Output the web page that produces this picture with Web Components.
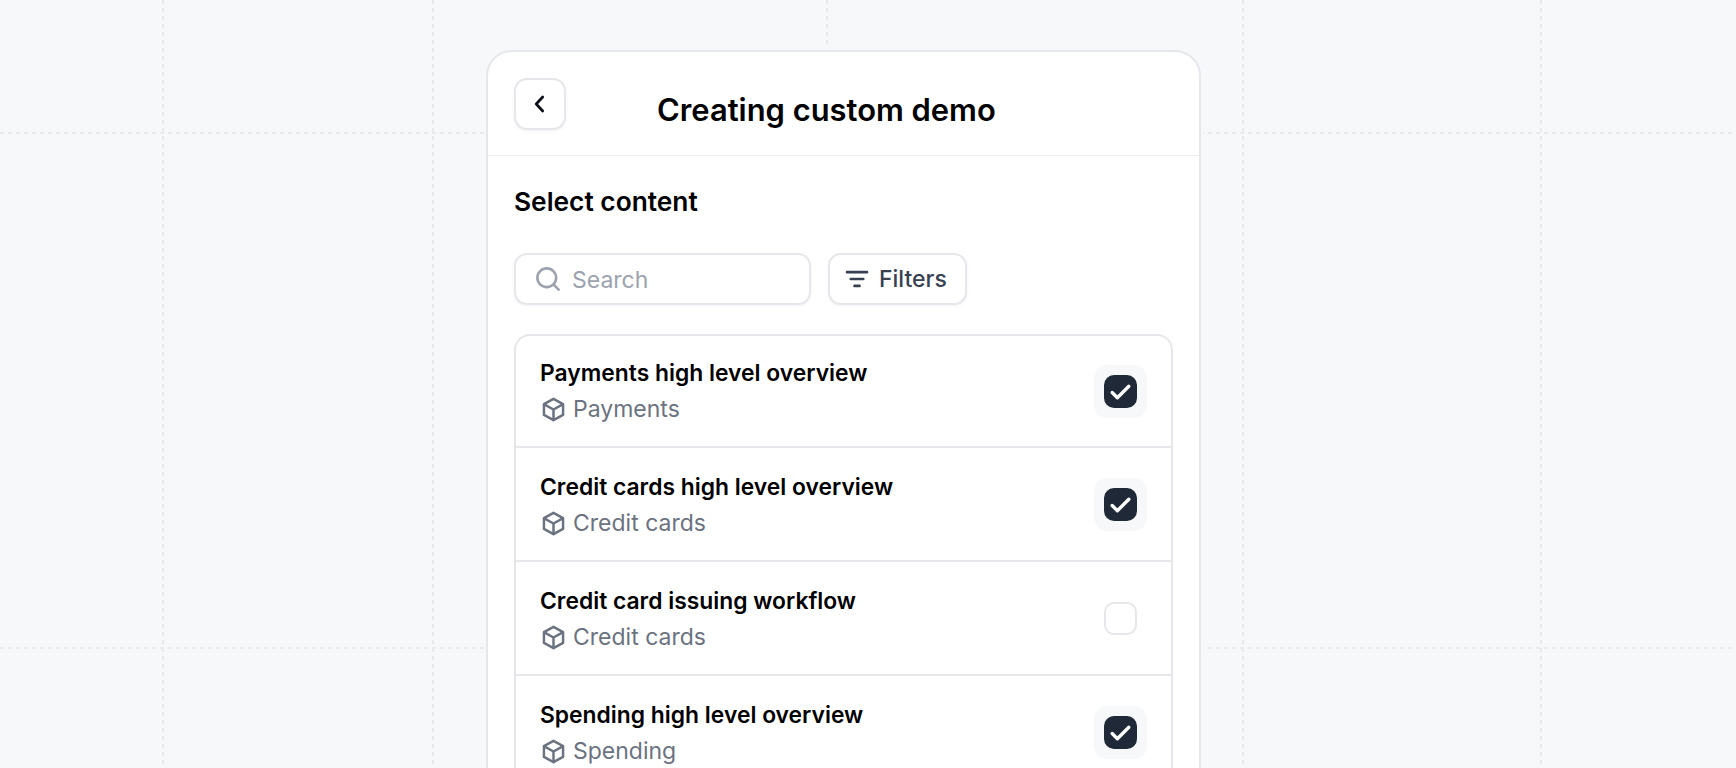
<!DOCTYPE html>
<html>
<head>
<meta charset="utf-8">
<title>Creating custom demo</title>
<style>
html, body { margin: 0; height: 100%; overflow: hidden; background: #f7f8fa; }
body { font-family: Inter, "Liberation Sans", sans-serif; }
</style>
</head>
<body>
<demo-backdrop>
	<demo-card>
		<demo-header title-text="Creating custom demo"></demo-header>
		<demo-section>
			<span slot="heading">Select content</span>
			<demo-toolbar></demo-toolbar>
			<demo-list>
				<demo-row checked label="Payments">Payments high level overview</demo-row>
				<demo-row checked label="Credit cards">Credit cards high level overview</demo-row>
				<demo-row label="Credit cards">Credit card issuing workflow</demo-row>
				<demo-row checked label="Spending">Spending high level overview</demo-row>
			</demo-list>
		</demo-section>
	</demo-card>
</demo-backdrop>

<script>
(function() {
	const dashV = "repeating-linear-gradient(to bottom, #e8eaee 0 4px, transparent 4px 8px)";
	const dashH = "repeating-linear-gradient(to right, #e8eaee 0 4px, transparent 4px 8px)";

	class DemoBackdrop extends HTMLElement {
		constructor() {
			super();
			this.attachShadow({mode: "open"}).innerHTML = `
				<style>
				:host {
					display: block;
					position: relative;
					width: 1736px;
					height: 768px;
					overflow: hidden;
					box-sizing: border-box;
					padding: 50px 0 0 486px;
					background: #f7f8fa;
				}
				.line { position: absolute; }
				.v { top: 0; bottom: 0; width: 2px; background: ${dashV}; }
				.h { left: 0; right: 0; height: 2px; background: ${dashH}; }
				</style>
				<div class="line v" style="left:162px"></div>
				<div class="line v" style="left:432px"></div>
				<div class="line v" style="left:826px"></div>
				<div class="line v" style="left:1242px"></div>
				<div class="line v" style="left:1540px"></div>
				<div class="line h" style="top:132px"></div>
				<div class="line h" style="top:647px"></div>
				<slot></slot>
			`;
		}
	}

	class DemoCard extends HTMLElement {
		constructor() {
			super();
			this.attachShadow({mode: "open"}).innerHTML = `
				<style>
				:host {
					display: block;
					position: relative;
					box-sizing: border-box;
					width: 715px;
					height: 900px;
					background: #fff;
					border: 2px solid #e5e7eb;
					border-radius: 26px;
					box-shadow: 0 0 0 2px #f7f8fa;
				}
				</style>
				<slot></slot>
			`;
		}
	}

	class DemoHeader extends HTMLElement {
		constructor() {
			super();
			this.attachShadow({mode: "open"}).innerHTML = `
				<style>
				:host {
					display: flex;
					align-items: flex-start;
					box-sizing: border-box;
					height: 104px;
					padding: 26px 26px 0;
					border-bottom: 1px solid #eceef1;
				}
				button {
					display: flex;
					align-items: center;
					justify-content: center;
					box-sizing: border-box;
					width: 52px;
					height: 52px;
					padding: 0;
					background: #fff;
					border: 2px solid #e5e7eb;
					border-radius: 13px;
					box-shadow: 0 1px 3px rgba(16,24,40,.06);
				}
				h1 {
					margin: 7px 0 0 91px;
					font: 600 30.9px/50px Inter, "Liberation Sans", sans-serif;
					color: #000;
				}
				</style>
				<button aria-label="Back">
					<svg width="26" height="26" viewBox="0 0 24 24" fill="none" stroke="#0b0f19" stroke-width="2.5" stroke-linecap="round" stroke-linejoin="round"><path d="M14.5 5.5 8.5 12l6 6.5"/></svg>
				</button>
				<h1></h1>
			`;
		}

		connectedCallback() {
			this.shadowRoot.querySelector("h1").textContent = this.getAttribute("title-text");
		}
	}

	class DemoSection extends HTMLElement {
		constructor() {
			super();
			this.attachShadow({mode: "open"}).innerHTML = `
				<style>
				:host {
					display: block;
					padding: 28px 26px 0;
				}
				h2 {
					margin: 0 0 33px;
					font: 600 26.3px/36px Inter, "Liberation Sans", sans-serif;
					color: #000;
				}
				</style>
				<h2><slot name="heading"></slot></h2>
				<slot></slot>
			`;
		}
	}

	class DemoToolbar extends HTMLElement {
		constructor() {
			super();
			this.attachShadow({mode: "open"}).innerHTML = `
				<style>
				:host {
					display: flex;
					gap: 17px;
					margin-bottom: 29px;
					font: 400 23px/32px Inter, "Liberation Sans", sans-serif;
				}
				.box {
					display: flex;
					align-items: center;
					box-sizing: border-box;
					height: 52px;
					background: #fff;
					border: 2px solid #e5e7eb;
					border-radius: 13px;
					box-shadow: 0 1px 3px rgba(16,24,40,.06);
				}
				.search {
					width: 297px;
					padding-left: 17px;
					gap: 9px;
					color: #9ca3af;
				}
				.search span { padding-top: 2px; }
				.filters {
					padding: 0 18px 0 12px;
					gap: 7px;
					color: #374151;
					font-weight: 500;
				}
				</style>
				<div class="box search">
					<svg width="30" height="30" viewBox="0 0 24 24" fill="none" stroke="#9ca3af" stroke-width="2.1" stroke-linecap="round"><circle cx="11" cy="11" r="7.5"/><path d="m16.5 16.5 4 4"/></svg>
					<span>Search</span>
				</div>
				<div class="box filters">
					<svg width="30" height="30" viewBox="0 0 24 24" fill="none" stroke="#374151" stroke-width="2.1" stroke-linecap="round"><path d="M4 6.5h16M7 12h10M10 17.5h4"/></svg>
					<span>Filters</span>
				</div>
			`;
		}
	}

	class DemoList extends HTMLElement {
		constructor() {
			super();
			this.attachShadow({mode: "open"}).innerHTML = `
				<style>
				:host {
					display: block;
					width: 659px;
					box-sizing: border-box;
					background: #fff;
					border: 2px solid #e5e7eb;
					border-radius: 16px;
				}
				</style>
				<slot></slot>
			`;
		}
	}

	class DemoRow extends HTMLElement {
		constructor() {
			super();
			this.attachShadow({mode: "open"}).innerHTML = `
				<style>
				:host {
					display: flex;
					align-items: center;
					justify-content: space-between;
					box-sizing: border-box;
					height: 114px;
					padding: 0 24px;
					border-bottom: 2px solid #e5e7eb;
				}
				:host(:first-child) { height: 112px; }
				.text { padding-top: 2px; }
				:host(:first-child) .text { padding-top: 0; }
				.title {
					font: 600 22.85px/36px Inter, "Liberation Sans", sans-serif;
					color: #000;
				}
				.sub {
					display: flex;
					align-items: center;
					gap: 6px;
					font: 400 23px/36px Inter, "Liberation Sans", sans-serif;
					color: #6b7280;
				}
				.halo {
					display: flex;
					align-items: center;
					justify-content: center;
					width: 53px;
					height: 53px;
					border-radius: 13px;
				}
				.halo.on { background: #f7f8fa; }
				.check {
					display: flex;
					align-items: center;
					justify-content: center;
					box-sizing: border-box;
					width: 33px;
					height: 33px;
					border: 2px solid #e5e7eb;
					border-radius: 10px;
					background: #fff;
				}
				.on .check { background: #1f2937; border-color: #1f2937; }
				.check svg { display: none; }
				.on .check svg { display: block; }
				</style>
				<div class="text">
					<div class="title"><slot></slot></div>
					<div class="sub">
						<svg width="27" height="27" viewBox="0 0 24 24" fill="none" stroke="#6b7280" stroke-width="2.2" stroke-linecap="round" stroke-linejoin="round"><path d="M12 2.5 20.5 7.2v9.6L12 21.5l-8.5-4.7V7.2Z"/><path d="M3.8 7.4 12 12l8.2-4.6M12 12v9.3"/></svg>
						<span class="label"></span>
					</div>
				</div>
				<div class="halo">
					<div class="check">
						<svg width="25" height="25" viewBox="0 0 24 24" fill="none" stroke="#fff" stroke-width="3.2" stroke-linecap="round" stroke-linejoin="round"><path d="m4 13 5 5L20 7"/></svg>
					</div>
				</div>
			`;
		}

		connectedCallback() {
			this.shadowRoot.querySelector(".label").textContent = this.getAttribute("label");
			this.shadowRoot.querySelector(".halo").classList.toggle("on", this.hasAttribute("checked"));
		}
	}

	customElements.define("demo-backdrop", DemoBackdrop);
	customElements.define("demo-card", DemoCard);
	customElements.define("demo-header", DemoHeader);
	customElements.define("demo-section", DemoSection);
	customElements.define("demo-toolbar", DemoToolbar);
	customElements.define("demo-list", DemoList);
	customElements.define("demo-row", DemoRow);
})();
</script>
</body>
</html>
